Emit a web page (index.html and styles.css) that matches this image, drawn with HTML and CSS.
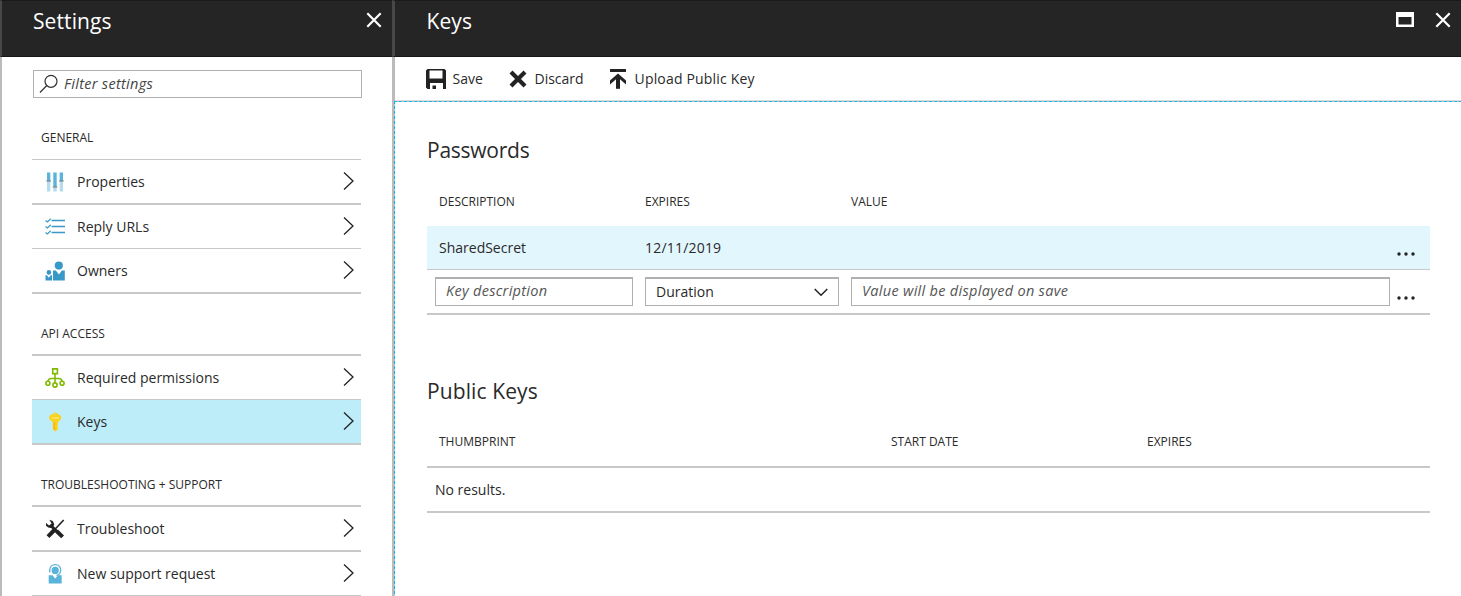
FILE: index.html
```html
<!DOCTYPE html>
<html lang="en">
<head>
<meta charset="utf-8">
<title>Keys</title>
<link rel="stylesheet" href="styles.css">
</head>
<body>
<svg class="defs" width="0" height="0">
  <symbol id="chevron" viewBox="0 0 12 20"><path d="M1 1.5 10 10 1 18.5" fill="none" stroke="#222" stroke-width="1.3"/></symbol>
  <symbol id="close" viewBox="0 0 16 16"><path d="M1.3 1.3 14.7 14.7M14.7 1.3 1.3 14.7" fill="none" stroke="#fff" stroke-width="2.2"/></symbol>
  <symbol id="dots" viewBox="0 0 20 4"><g fill="#222"><circle cx="3" cy="2" r="1.7"/><circle cx="10" cy="2" r="1.7"/><circle cx="17" cy="2" r="1.7"/></g></symbol>
</svg>
<div class="app">
  <aside class="settings">
    <header class="bar">
      <h1 class="title">Settings</h1>
      <svg width="16" height="16"><use href="#close"/></svg>
    </header>
    <div class="settings-body">
      <div class="filter">
        <svg width="20" height="20" viewBox="0 0 20 20" fill="none" stroke="#333" stroke-width="1.2"><circle cx="12" cy="7.3" r="6"/><path d="M7.8 11.5 1 18.5"/></svg>
        <span class="placeholder">Filter settings</span>
      </div>
      <h2 class="group">GENERAL</h2>
      <ul class="menu m-general">
        <li class="item h45"><svg class="ico" viewBox="0 0 20 20"><path d="M2 .5h3.300V9H2zM8.300.5h3.400V15H8.300zM14.700.5H18V9h-3.300z" fill="#59b4d9"/><path d="M2 9h3.300v10.500H2zM8.300 15h3.400v4.500H8.300zM14.700 9H18v10.500h-3.300z" fill="#b5dcec"/><path d="M1.300 9h4.700M7.600 15h4.800M14 9h4.700" stroke="#7a7a7a" stroke-width="1.2"/></svg><span>Properties</span><svg class="chev"><use href="#chevron"/></svg></li>
        <li class="item h44"><svg class="ico" viewBox="0 0 20 20" fill="none" stroke="#3999c6"><path d="M6.500 3.500H20M6.500 9.500H20M6.500 15.500H20" stroke-width="1.3"/><path d="m.5 3.500 1.900 1.500 3.300-3.200M.5 9.500l1.900 1.500 3.300-3.200M.5 15.500l1.900 1.500 3.300-3.200" stroke-width="1.200"/></svg><span>Reply URLs</span><svg class="chev"><use href="#chevron"/></svg></li>
        <li class="item h45"><svg class="ico" viewBox="0 0 20 20" fill="#3999c6"><circle cx="13.8" cy="4.6" r="4.1"/><circle cx="3.9" cy="11.400" r="2.300"/><path d="M8 9.500h2.800l3.200 4 2.800-4h3v10H8zM.5 14.200h1.400l2 2.500 1.800-2.500H7v5.300H.5z"/></svg><span>Owners</span><svg class="chev"><use href="#chevron"/></svg></li>
      </ul>
      <h2 class="group">API ACCESS</h2>
      <ul class="menu">
        <li class="item h44"><svg class="ico" viewBox="0 0 20 20" fill="none" stroke="#7fba00" stroke-width="1.600"><path d="M7.700.9h4.700v4.700H7.700zM10 5.600v8.800M3 13.300c.2-2 1-2.800 3-2.800h8c2 0 2.800.8 3 2.800"/><circle cx="2.900" cy="15.300" r="2"/><circle cx="10" cy="17" r="2.100"/><circle cx="17.100" cy="15.300" r="2"/></svg><span>Required permissions</span><svg class="chev"><use href="#chevron"/></svg></li>
        <li class="item h45 selected"><svg class="ico" viewBox="0 0 20 20"><path fill="#fcd116" fill-rule="evenodd" d="M10.200.2 16 4.100v2.900L12.800 10.200v7l-2.300 2.300L7.800 17.300v-7L4.300 7V4.100zM10.200 1.500a1 1 0 1 0 .01 2z"/><path fill="#fde77f" d="M6.500 5.200h7.500v1.500H6.500z"/><path fill="#f5ba16" d="M8.400 10.500h1.800v8L8.400 17.100z"/></svg><span>Keys</span><svg class="chev"><use href="#chevron"/></svg></li>
      </ul>
      <h2 class="group">TROUBLESHOOTING + SUPPORT</h2>
      <ul class="menu">
        <li class="item h45"><svg class="ico" viewBox="0 0 20 20"><path d="M18.700 1 9.500 10.800" stroke="#222" stroke-width="1.600"/><path d="M9.800 10.500 3 17.600" stroke="#222" stroke-width="4"/><path d="M5.800 6.500 12 12.500" stroke="#222" stroke-width="3"/><path d="M11.500 12 17.600 17.900" stroke="#222" stroke-width="4"/><path d="M4.300.8 7.800 2.100 9.300 5.500 7.200 9.200 3.300 8.500 1 6.800V4L4 6.400 6.600 4.500z" fill="#222"/></svg><span>Troubleshoot</span><svg class="chev"><use href="#chevron"/></svg></li>
        <li class="item h45"><svg class="ico" viewBox="0 0 20 20"><path d="M4.700 8.600V6.100C4.900-1.100 15.500-1.100 15.700 6.100 15.700 9.200 14 11 11.500 11.500" fill="none" stroke="#59b4d9" stroke-width="1.300"/><circle cx="10.200" cy="6.400" r="3.600" fill="#59b4d9"/><path d="M3.700 11.200h3.800l2.700 3.300 2.700-3.300h3.800v8.300h-13z" fill="#59b4d9"/></svg><span>New support request</span><svg class="chev"><use href="#chevron"/></svg></li>
      </ul>
    </div>
  </aside>

  <main class="keys">
    <header class="bar">
      <h1 class="title">Keys</h1>
      <svg class="maximize" width="18" height="15" viewBox="0 0 18 15"><path d="M0 0h18v15H0zM2.500 5v7.500h13V5z" fill="#fff" fill-rule="evenodd"/></svg>
      <svg width="16" height="16"><use href="#close"/></svg>
    </header>
    <nav class="commands">
      <span class="command save"><svg width="20" height="20" viewBox="0 0 20 20"><path fill="#222" fill-rule="evenodd" d="M1.500 0h17L20 1.500V20h-3v-6H4v6H1.500L0 18.500V1.500zM3.500 1.500v8h13v-8z"/><path fill="#222" d="M6.500 16.500h3.500V20H6.500z"/></svg><span>Save</span></span>
      <span class="command discard"><svg width="18" height="18" viewBox="0 0 18 18"><path d="M2 2 16 16M16 2 2 16" stroke="#222" stroke-width="4.200"/></svg><span>Discard</span></span>
      <span class="command upload"><svg width="16" height="20" viewBox="0 0 16 20"><path d="M0 0h16v3H0z" fill="#222"/><path d="M8 19.800V7.500" stroke="#222" stroke-width="4"/><path d="M8 4.500 16 11.500v4L8 8.600 0 15.500v-4z" fill="#222"/></svg><span>Upload Public Key</span></span>
    </nav>
    <section class="content">
      <h2 class="section s-passwords">Passwords</h2>
      <div class="row pw head"><span>DESCRIPTION</span><span>EXPIRES</span><span>VALUE</span></div>
      <div class="row pw secret"><span>SharedSecret</span><span class="date">12/11/2019</span><span></span><svg class="dots" width="20" height="4"><use href="#dots"/></svg></div>
      <div class="row pw entry">
        <div class="field f-key"><span class="placeholder">Key description</span></div>
        <div class="field f-duration"><span>Duration</span><svg width="14" height="9" viewBox="0 0 14 9"><path d="m.7 1 6.300 6.300L13.300 1" fill="none" stroke="#222" stroke-width="1.500"/></svg></div>
        <div class="field f-value"><span class="placeholder">Value will be displayed on save</span></div>
        <svg class="dots" width="20" height="4"><use href="#dots"/></svg>
      </div>
      <h2 class="section s-public">Public Keys</h2>
      <div class="row pk"><span>THUMBPRINT</span><span>START DATE</span><span>EXPIRES</span></div>
      <div class="row none"><span>No results.</span></div>
    </section>
  </main>
</div>
</body>
</html>
```
FILE: styles.css
```css
* { box-sizing: border-box; }
body { margin: 0; width: 1461px; height: 596px; overflow: hidden; background: #fff; color: #2a2a2a; font: 14px/20px "Open Sans", "Noto Sans", sans-serif; }
h1, h2, ul { margin: 0; padding: 0; font-weight: 400; list-style: none; }
svg { display: block; flex: none; }
span { white-space: nowrap; }
.defs { position: absolute; }
.app { display: flex; height: 596px; }
.settings { width: 392px; border-left: 2px solid #bbb; }
.keys { flex: 1; border-left: 3px solid #bbb; }
.bar { display: flex; height: 57px; background: #252525; border-top: 1px solid #1a1a1a; border-bottom: 1px solid #161616; color: #fff; }
.settings .bar { margin-left: -2px; padding: 11px 10px 0 31px; border-left: 2px solid #484848; }
.keys .bar { margin-left: -3px; padding: 11px 10px 0 31.5px; border-left: 3px solid #484848; }
.title { flex: 1; font-size: 21px; line-height: 18px; letter-spacing: 0.1px; }
.maximize { margin-right: 21px; }

.settings-body { padding: 13px 30px 0 30px; }
.filter { display: flex; align-items: center; width: 328.500px; height: 28px; margin-left: 1px; padding-left: 5px; gap: 5px; border: 1px solid #b0b0b0; color: #444; }
.placeholder { font-size: 14.500px; font-style: italic; letter-spacing: 0.300px; }
.group { margin-top: 30px; padding-left: 9px; font-size: 12px; line-height: 20px; }
.menu { width: 329px; margin-top: 10px; border-top: 2px solid #c8c8c8; }
.m-general { margin-top: 11px; border-top-width: 1px; }
.item { display: flex; align-items: center; padding: 1px 6px 0 13px; border-bottom: 2px solid #c8c8c8; }
.h45 { height: 45px; }
.h44 { height: 44px; border-bottom-width: 1px; }
.item span { margin-left: 12px; flex: 1; }
.ico { width: 20px; height: 20px; }
.chev { width: 12px; height: 20px; margin-top: -3px; }
.selected { background: #bdedf9; }

.commands { display: flex; height: 44px; padding: 1px 0 0 31px; border-bottom: 1px solid #ddd; }
.command { display: flex; align-items: center; gap: 6.500px; }
.save { width: 83px; }
.discard { width: 101px; gap: 7.500px; }
.upload { gap: 8.500px; letter-spacing: 0.180px; }
.content { height: 495px; margin-left: -1px; padding: 39px 31px 0 33px; background: repeating-linear-gradient(90deg, #19b8ea 0 3px, #b8b8b8 3px 5px) top / 100% 1px no-repeat, repeating-linear-gradient(#00bcf2 0 3px, #a8ccd8 3px 5px) left / 1px 100% no-repeat; }
.section { font-size: 21px; line-height: 20px; }
.s-passwords { letter-spacing: -0.250px; }
.row { display: grid; width: 1003px; align-items: center; border-bottom: 2px solid #c8c8c8; }
.pw { grid-template-columns: 206px 206px 545px 20px; padding-left: 12px; }
.head { height: 47px; margin-top: 19px; padding-bottom: 2px; border: 0; font-size: 12px; }
.secret { height: 44px; background: #e2f6fd; border-bottom: 1px solid #c8c8c8; }
.secret .dots { margin-top: 13px; }
.date { letter-spacing: 0.200px; }
.entry { height: 45px; }
.entry .dots { margin-top: 13px; }
.field { display: flex; align-items: center; height: 29px; padding: 0 10px; border: 1px solid #b0b0b0; border-top-width: 2px; }
.field .placeholder { margin-top: -2px; color: #555; }
.f-key { width: 198px; margin-left: -4px; }
.f-duration { width: 194px; justify-content: space-between; }
.f-value { width: 539px; }
.s-public { margin-top: 66px; letter-spacing: 0.100px; }
.pk { height: 49px; margin-top: 18px; padding: 0 0 2px 12px; grid-template-columns: 452px 256px 1fr; font-size: 12px; }
.none { height: 45px; padding-left: 8px; }
```
